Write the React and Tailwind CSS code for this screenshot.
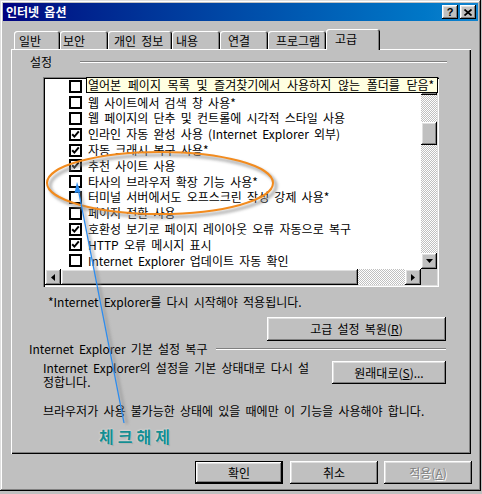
import React from 'react';

const raised = 'shadow-[inset_-1px_-1px_#000,inset_1px_1px_#fff,inset_-2px_-2px_#808080,inset_2px_2px_#dfdfdf]';
const F = "font-['Noto_Sans_CJK_KR','Liberation_Sans',sans-serif]";

const rows = [
  { t: '', c: false },
  { t: '웹 사이트에서 검색 창 사용*', c: false },
  { t: '웹 페이지의 단추 및 컨트롤에 시각적 스타일 사용', c: false },
  { t: '인라인 자동 완성 사용 (Internet Explorer 외부)', c: true },
  { t: '자동 크래시 복구 사용*', c: true },
  { t: '추천 사이트 사용', c: true },
  { t: '타사의 브라우저 확장 기능 사용*', c: false },
  { t: '터미널 서버에서도 오프스크린 작성 강제 사용*', c: false },
  { t: '페이지 전환 사용', c: false },
  { t: '호환성 보기로 페이지 레이아웃 오류 자동으로 복구', c: true },
  { t: 'HTTP 오류 메시지 표시', c: true },
  { t: 'Internet Explorer 업데이트 자동 확인', c: false },
];

function Check({ on }) {
  return (
    <div className="w-[13px] h-[13px] border-2 border-black bg-white flex items-center justify-center shrink-0">
      {on && (
        <svg width="9" height="9" viewBox="0 0 9 9">
          <polyline points="1.2,4.2 3.4,6.6 7.8,1.4" fill="none" stroke="#000" strokeWidth="2" />
        </svg>
      )}
    </div>
  );
}

function Btn({ children, cls = '', def = false, disabled = false }) {
  const inner = (
    <div className={`h-full w-full flex items-center justify-center bg-[#c0c0c0] ${raised} ${disabled ? 'text-[#808080] [text-shadow:1px_1px_0_#fff]' : 'text-black'} text-[12px] leading-none`}>
      {children}
    </div>
  );
  if (def) return <div className={`border border-black ${cls}`}>{inner}</div>;
  return <div className={cls}>{inner}</div>;
}

const checker = 'bg-[repeating-conic-gradient(#c0c0c0_0_25%,#ffffff_0_50%)] bg-[length:2px_2px]';

function Tri({ dir }) {
  const pts = { down: '0,0 7,0 3.5,4', right: '0,0 4,3.5 0,7', left: '4,0 0,3.5 4,7' }[dir];
  const w = dir === 'down' ? 7 : 4;
  const h = dir === 'down' ? 4 : 7;
  return (
    <svg width={w} height={h} viewBox={`0 0 ${w} ${h}`}>
      <polygon points={pts} fill="#000" />
    </svg>
  );
}

function Tab({ label, w, pl, sel }) {
  if (sel)
    return (
      <div className={`relative z-10 -mb-px h-[21px] ${w} ${pl} bg-[#c0c0c0] rounded-t-[3px] shadow-[inset_1px_1px_#fff,inset_-1px_0_#000,inset_-2px_0_#808080] text-[12px] leading-[20px]`}>
        {label}
      </div>
    );
  return (
    <div className={`h-[18px] ${w} ${pl} bg-[#c0c0c0] rounded-t-[3px] shadow-[inset_1px_1px_#fff,inset_-1px_0_#000,inset_-2px_0_#808080] text-[12px] leading-[19px]`}>
      {label}
    </div>
  );
}

export default function App() {
  return (
    <div className={`relative w-[482px] h-[494px] bg-[#c0c0c0] ${F} text-black overflow-hidden [word-spacing:2.5px]`}>
      <div className="w-[481px] h-[491px] p-[3px] bg-[#c0c0c0] shadow-[inset_-1px_-1px_#000,inset_1px_1px_#dfdfdf,inset_-2px_-2px_#808080,inset_2px_2px_#fff] flex flex-col">
        {/* title bar */}
        <div className="h-[18px] bg-gradient-to-r from-[#000080] to-[#1084d0] flex items-center pl-[3px] pr-[2px]">
          <span className="text-white font-bold text-[12px] leading-none">인터넷 옵션</span>
          <div className="ml-auto flex gap-[2px]">
            <div className={`w-[16px] h-[14px] bg-[#c0c0c0] ${raised} flex items-center justify-center text-[11px] font-bold leading-none font-['Liberation_Sans',sans-serif]`}>?</div>
            <div className={`w-[16px] h-[14px] bg-[#c0c0c0] ${raised} flex items-center justify-center`}>
              <svg width="8" height="7" viewBox="0 0 8 7">
                <path d="M0.5 0.5 L7.5 6.5 M7.5 0.5 L0.5 6.5" stroke="#000" strokeWidth="1.7" />
              </svg>
            </div>
          </div>
        </div>

        {/* tabs */}
        <div className="mt-[8px] ml-[11px] h-[20px] flex items-end">
          <Tab label="일반" w="w-[46px]" pl="pl-[5px]" />
          <Tab label="보안" w="w-[48px]" pl="pl-[3px]" />
          <Tab label="개인 정보" w="w-[64px]" pl="pl-[6px]" />
          <Tab label="내용" w="w-[48px]" pl="pl-[4px]" />
          <Tab label="연결" w="w-[48px]" pl="pl-[8px]" />
          <Tab label="프로그램" w="w-[58px]" pl="pl-[8px]" />
          <Tab label="고급" w="w-[54px]" pl="pl-[9px]" sel />
        </div>

        {/* panel */}
        <div className="ml-[8px] w-[460px] h-[405px] bg-[#c0c0c0] shadow-[inset_1px_1px_#fff,inset_-1px_-1px_#000,inset_-2px_-2px_#808080] flex flex-col">
          <div className="mt-[6px] h-[14px] flex items-center">
            <span className="ml-[19px] text-[12px] leading-none">설정</span>
            <div className="ml-[28px] w-[367px] h-[2px] border-t border-b border-t-[#808080] border-b-white" />
          </div>

          {/* list box */}
          <div className="relative mt-[8px] ml-[32px] w-[396px] h-[210px] p-[2px] bg-white shadow-[inset_1px_1px_#808080,inset_2px_2px_#000,inset_-1px_-1px_#fff,inset_-2px_-2px_#dfdfdf] flex flex-col">
            <div className="flex h-[190px]">
              <div className="w-[376px] h-[190px] overflow-hidden">
                {rows.map((r, i) => (
                  <div key={i} className="h-[15.8px] flex items-center whitespace-nowrap">
                    <div className="ml-[24px]"><Check on={r.c} /></div>
                    {r.t && <span className="ml-[6px] text-[12px] leading-none">{r.t}</span>}
                  </div>
                ))}
              </div>
              <div className="w-[16px] h-[190px] flex flex-col">
                <div className={`h-[16px] bg-[#c0c0c0] ${raised}`} />
                <div className={`h-[27px] ${checker}`} />
                <div className={`h-[23px] bg-[#c0c0c0] ${raised}`} />
                <div className={`h-[108px] ${checker}`} />
                <div className={`h-[16px] bg-[#c0c0c0] ${raised} flex items-center justify-center`}><Tri dir="down" /></div>
              </div>
            </div>
            <div className="flex h-[16px]">
              <div className={`w-[16px] bg-[#c0c0c0] ${raised} flex items-center justify-center`}><Tri dir="left" /></div>
              <div className={`w-[297px] bg-[#c0c0c0] ${raised}`} />
              <div className={`w-[47px] ${checker}`} />
              <div className={`w-[16px] bg-[#c0c0c0] ${raised} flex items-center justify-center`}><Tri dir="right" /></div>
              <div className="w-[16px] bg-[#c0c0c0]" />
            </div>
            {/* tooltip */}
            <div className="absolute left-[43px] top-0 w-[352px] h-[16px] bg-[#ffffe1] border border-black flex items-center pl-[1px] whitespace-nowrap overflow-hidden">
              <span className="text-[12px] leading-none [word-spacing:4px]">열어본 페이지 목록 및 즐겨찾기에서 사용하지 않는 폴더를 닫음*</span>
            </div>
          </div>

          <div className="mt-[8px] ml-[37px] h-[14px] flex items-center text-[12px] leading-none">*Internet Explorer를 다시 시작해야 적용됩니다.</div>

          <Btn cls="mt-[8px] ml-[256px] w-[179px] h-[24px]">고급 설정 복원(<span className="underline">R</span>)</Btn>

          <div className="mt-[1px] h-[14px] flex items-center">
            <span className="ml-[18px] text-[12px] leading-none">Internet Explorer 기본 설정 복구</span>
            <div className="ml-auto mr-[25px] w-[230px] h-[2px] border-t border-b border-t-[#808080] border-b-white" />
          </div>

          <div className="mt-[5px] flex">
            <div className="ml-[32px] flex flex-col text-[12px] leading-none">
              <div className="h-[13px] flex items-center">Internet Explorer의 설정을 기본 상태대로 다시 설</div>
              <div className="h-[13px] mt-[1px] flex items-center">정합니다.</div>
            </div>
            <Btn cls="ml-auto mr-[25px] w-[114px] h-[23px]">원래대로(<span className="underline">S</span>)...</Btn>
          </div>

          <div className="mt-[16px] ml-[32px] h-[14px] flex items-center text-[12px] leading-none">
            브라우저가 사용 불가능한 상태에 있을 때에만 이 기능을 사용해야 합니다.
          </div>

          <div className="mt-[9px] ml-[88px] h-[18px] flex items-center text-[16px] font-bold leading-none tracking-[4px] text-[#138e92] [text-shadow:0_0_2px_#ffffff,1px_1px_1px_#9a9a9a]">
            체크해제
          </div>
        </div>

        {/* bottom buttons */}
        <div className="mt-[7px] flex justify-end pr-[6px]">
          <Btn def cls="w-[88px] h-[23px]">확인</Btn>
          <Btn cls="ml-[7px] w-[88px] h-[23px]">취소</Btn>
          <Btn disabled cls="ml-[6px] w-[88px] h-[23px]">적용(<span className="underline">A</span>)</Btn>
        </div>
      </div>

      {/* annotation overlay */}
      <svg className="absolute inset-0 pointer-events-none" width="482" height="494" viewBox="0 0 482 494">
        <defs>
          <filter id="blur" x="-10%" y="-10%" width="120%" height="120%">
            <feGaussianBlur stdDeviation="1.5" />
          </filter>
        </defs>
        <ellipse cx="163" cy="186" rx="113" ry="31" fill="none" stroke="#8a8a8a" strokeWidth="3" filter="url(#blur)" opacity="0.7" />
        <ellipse cx="160" cy="183" rx="113" ry="31" fill="none" stroke="#f28b1e" strokeWidth="2" />
        <line x1="80" y1="190" x2="127" y2="424" stroke="#8a8a8a" strokeWidth="2.5" filter="url(#blur)" opacity="0.6" />
        <line x1="78" y1="188" x2="124" y2="423" stroke="#2b8cf0" strokeWidth="1.3" />
        <polygon points="77,182 74.5,193 80.5,192" fill="#2b8cf0" />
      </svg>
    </div>
  );
}
